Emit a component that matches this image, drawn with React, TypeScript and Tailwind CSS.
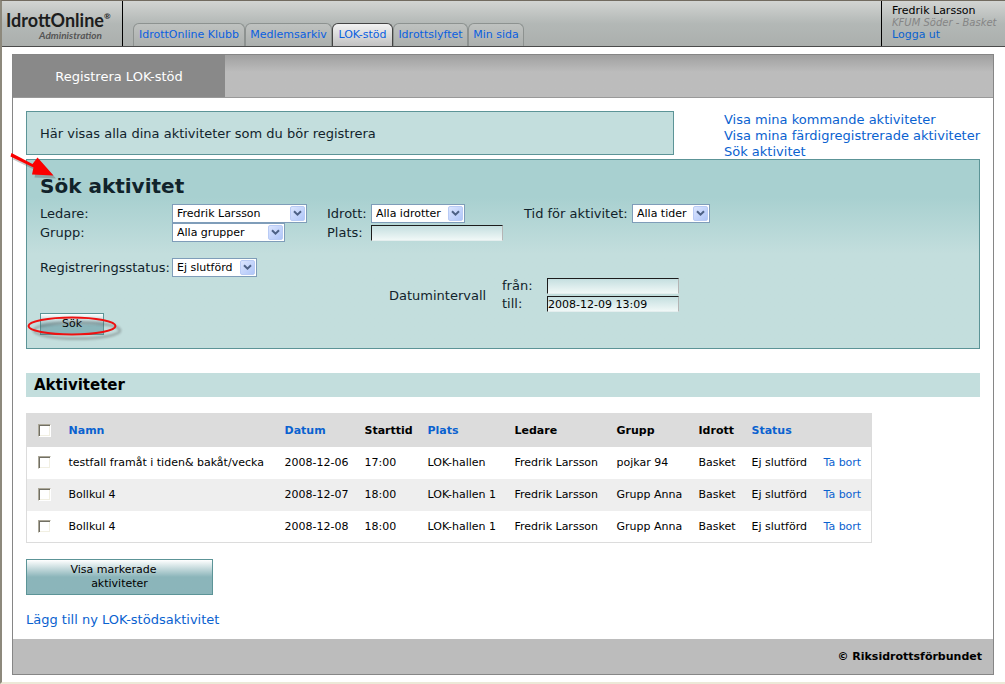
import type { ReactNode } from "react";

const tabs = [
  { label: "IdrottOnline Klubb", width: "w-[112px]", active: false },
  { label: "Medlemsarkiv", width: "w-[87px]", active: false },
  { label: "LOK-stöd", width: "w-[61px]", active: true },
  { label: "Idrottslyftet", width: "w-[75px]", active: false },
  { label: "Min sida", width: "w-[56px]", active: false },
];

const columns = [
  { label: "Namn", sortable: true, width: "w-[216px]" },
  { label: "Datum", sortable: true, width: "w-[80px]" },
  { label: "Starttid", sortable: false, width: "w-[63px]" },
  { label: "Plats", sortable: true, width: "w-[87px]" },
  { label: "Ledare", sortable: false, width: "w-[102px]" },
  { label: "Grupp", sortable: false, width: "w-[82px]" },
  { label: "Idrott", sortable: false, width: "w-[53px]" },
  { label: "Status", sortable: true, width: "w-[72px]" },
];

const activities = [
  ["testfall framåt i tiden& bakåt/vecka", "2008-12-06", "17:00", "LOK-hallen", "Fredrik Larsson", "pojkar 94", "Basket", "Ej slutförd"],
  ["Bollkul 4", "2008-12-07", "18:00", "LOK-hallen 1", "Fredrik Larsson", "Grupp Anna", "Basket", "Ej slutförd"],
  ["Bollkul 4", "2008-12-08", "18:00", "LOK-hallen 1", "Fredrik Larsson", "Grupp Anna", "Basket", "Ej slutförd"],
];

function Select({ id, value, width }: { id: string; value: string; width: string }) {
  return (
    <div className={`relative h-[19px] ${width}`}>
      <select
        id={id}
        className="block h-full w-full appearance-none border border-[#7f9db9] bg-white pl-1 text-[11px] leading-[17px] text-black outline-none"
      >
        <option>{value}</option>
      </select>
      <span className="pointer-events-none absolute top-[2px] right-[2px] flex h-[15px] w-[15px] items-center justify-center rounded-[2px] border border-[#b9cbf5] bg-linear-to-br from-[#dbe5fe] to-[#b0c6f8]">
        <svg width="9" height="7" viewBox="0 0 9 7" fill="none" aria-hidden="true">
          <path d="M1 1.2 4.5 4.7 8 1.2" stroke="#4d6185" strokeWidth="2" />
        </svg>
      </span>
    </div>
  );
}

function TextInput({ id, value }: { id: string; value?: string }) {
  return (
    <input
      id={id}
      type="text"
      defaultValue={value}
      className="block h-4 w-[132px] border border-t-[#1c1c1c] border-r-[#b5b5b5] border-b-[#e4eeee] border-l-[#1c1c1c] bg-linear-to-b from-[#c5dfe0] to-[#f0f8f7] text-[11px] leading-[14px] text-black outline-none"
    />
  );
}

function Checkbox({ label }: { label: string }) {
  return (
    <input
      type="checkbox"
      aria-label={label}
      className="block h-[13px] w-[13px] appearance-none border border-t-[#aca899] border-r-white border-b-white border-l-[#aca899] bg-white shadow-[inset_1px_1px_0_#716f64,inset_-1px_-1px_0_#f1efe2]"
    />
  );
}

function Link({ children }: { children: ReactNode }) {
  return (
    <a href="#" className="text-[#0a62d0]">
      {children}
    </a>
  );
}

export default function App() {
  return (
    <div className="border-t border-b-2 border-l-2 border-t-[#716a5f] border-b-[#ece9d8] border-l-[#8d897c] bg-white font-['DejaVu_Sans',Verdana,sans-serif] text-[13px] text-[#11232b]">
      <header className="flex h-[46px] border-b border-[#4b4b4b] bg-linear-to-b from-[#d2d4d2] via-[#b3b8b6] to-[#abafad]">
        <div className="flex w-[121px] flex-col border-r border-black pt-2.5 pl-1 font-[Lato,sans-serif]">
          <div className="flex items-start text-[18px] leading-[18px] font-bold text-[#1d1d1d]">
            IdrottOnline
            <span className="text-[8px] leading-[10px]">®</span>
          </div>
          <div className="w-[96px] text-right text-[10px] leading-3 font-bold text-[#555] italic">Administration</div>
        </div>
        <nav className="ml-2.5 flex flex-1 items-end">
          {tabs.map((tab) => (
            <a
              key={tab.label}
              href="#"
              className={`flex h-[23px] items-center justify-center rounded-t-[6px] border border-b-0 pt-px text-[11px] whitespace-nowrap text-[#0a5fe0] ${tab.width} ${
                tab.active
                  ? "border-[#444] bg-linear-to-b from-[#f2f2f2] to-[#c2c2c2]"
                  : "border-[#8d9290] bg-linear-to-b from-[#bfc2c0] to-[#abafad]"
              }`}
            >
              {tab.label}
            </a>
          ))}
        </nav>
        <div className="w-[124px] border-l border-black pt-1 pl-2.5 text-[11px] leading-3 whitespace-nowrap">
          <div className="text-black">Fredrik Larsson</div>
          <div className="text-[10px] text-[#858585] italic">KFUM Söder - Basket</div>
          <Link>Logga ut</Link>
        </div>
      </header>

      <main className="mt-[7px] mr-[11px] mb-[7px] ml-2.5 border border-[#868686]">
        <div className="flex h-[43px] border-b border-[#999] bg-linear-to-b from-[#a0a0a0] to-[#bcbcbc] to-40%">
          <div className="flex w-[212px] items-center justify-center bg-[#898989] pt-0.5 text-white">Registrera LOK-stöd</div>
        </div>

        <div className="px-[13px] pt-[13px] pb-[11px]">
          <div className="flex items-start justify-between">
            <div className="flex h-11 w-[648px] items-center border border-[#5c9497] bg-[#c3dedd] px-[13px] pt-0.5">
              Här visas alla dina aktiviteter som du bör registrera
            </div>
            <div className="-mb-1 flex w-[256px] flex-col pt-px leading-4 whitespace-nowrap">
              <Link>Visa mina kommande aktiviteter</Link>
              <Link>Visa mina färdigregistrerade aktiviteter</Link>
              <Link>Sök aktivitet</Link>
            </div>
          </div>

          <section className="relative mt-[3px] border border-[#5c9497] bg-linear-to-b from-[#a8d0d0] from-20% to-[#c3dedd] to-50% px-[13px] pt-[14px] pb-[13px]">
            <h1 className="mb-1.5 text-[20px] leading-6 font-bold">Sök aktivitet</h1>
            <form>
              <div className="flex leading-[19px] whitespace-nowrap">
                <div className="grid w-[287px] grid-cols-[132px_1fr] content-start">
                  <label htmlFor="ledare">Ledare:</label>
                  <Select id="ledare" value="Fredrik Larsson" width="w-[135px]" />
                  <label htmlFor="grupp">Grupp:</label>
                  <Select id="grupp" value="Alla grupper" width="w-[113px]" />
                </div>
                <div className="grid w-[197px] grid-cols-[44px_1fr] content-start items-center">
                  <label htmlFor="idrott">Idrott:</label>
                  <Select id="idrott" value="Alla idrotter" width="w-[94px]" />
                  <label htmlFor="plats">Plats:</label>
                  <TextInput id="plats" />
                </div>
                <div className="flex items-start">
                  <label htmlFor="tid" className="w-[108px]">Tid för aktivitet:</label>
                  <Select id="tid" value="Alla tider" width="w-[78px]" />
                </div>
              </div>
              <div className="mt-4 flex leading-[19px] whitespace-nowrap">
                <label htmlFor="status" className="w-[132px]">Registreringsstatus:</label>
                <Select id="status" value="Ej slutförd" width="w-[85px]" />
              </div>
              <fieldset className="ml-[349px] flex items-center">
                <div className="w-[113px] pt-0.5">Datumintervall</div>
                <div className="grid grid-cols-[45px_auto] items-center leading-[18px]">
                  <label htmlFor="fran">från:</label>
                  <TextInput id="fran" />
                  <label htmlFor="till">till:</label>
                  <TextInput id="till" value="2008-12-09 13:09" />
                </div>
              </fieldset>
              <button
                type="button"
                className="block h-[22px] w-16 border border-[#5c9497] bg-linear-to-b from-white to-[#8bb5ba] to-60% text-[11px] leading-5 text-black"
              >
                Sök
              </button>
            </form>
            <svg className="pointer-events-none absolute -top-2 -left-[22px] h-[42px] w-14" viewBox="0 0 56 42" aria-hidden="true">
              <g fill="#444" opacity=".3" transform="translate(2.5 3)">
                <path d="M6.500 1 27.500 12 32.500 5.500 48.500 23.500 27 22.500 28.500 15.500 5.500 4.500Z" />
              </g>
              <path d="M6.500 1 27.500 12 32.500 5.500 48.500 23.500 27 22.500 28.500 15.500 5.500 4.500Z" fill="#fb0000" />
            </svg>
            <svg className="pointer-events-none absolute bottom-1 left-0 h-8 w-[104px]" viewBox="0 0 104 32" fill="none" aria-hidden="true">
              <defs>
                <filter id="ring-shadow" x="-10%" y="-40%" width="120%" height="180%">
                  <feGaussianBlur stdDeviation="1" />
                </filter>
              </defs>
              <ellipse cx="50" cy="18.500" rx="43" ry="8" stroke="#444" strokeWidth="3" opacity=".3" filter="url(#ring-shadow)" />
              <ellipse cx="45" cy="14" rx="43.500" ry="8.500" stroke="#ee1111" strokeWidth="2" />
            </svg>
          </section>

          <h2 className="mt-6 h-6 bg-[#c3dedd] pl-2 text-[15px] leading-6 font-bold text-black">Aktiviteter</h2>

          <table className="mt-4 w-[846px] table-fixed border-collapse border border-[#dcdcdc] text-left text-[11px] whitespace-nowrap text-black">
            <thead className="bg-[#dcdcdc]">
              <tr className="h-[33px]">
                <th className="w-[42px] pl-[11px]">
                  <Checkbox label="Markera alla" />
                </th>
                {columns.map((column) => (
                  <th key={column.label} className={`p-0 pt-px font-bold ${column.width}`}>
                    {column.sortable ? <Link>{column.label}</Link> : column.label}
                  </th>
                ))}
                <th aria-label="Åtgärd" />
              </tr>
            </thead>
            <tbody>
              {activities.map((row, index) => (
                <tr key={index} className="h-8 even:bg-[#eee]">
                  <td className="pl-[11px]">
                    <Checkbox label={`Markera ${row[0]} ${row[1]}`} />
                  </td>
                  {row.map((cell, cellIndex) => (
                    <td key={cellIndex} className="p-0 pt-px">{cell}</td>
                  ))}
                  <td className="p-0 pt-px">
                    <Link>Ta bort</Link>
                  </td>
                </tr>
              ))}
            </tbody>
          </table>

          <button
            type="button"
            className="mt-4 block h-9 w-[187px] border border-[#5c9497] bg-linear-to-b from-white to-[#8bb5ba] to-50% text-[11px] leading-[14px] text-black"
          >
            <span className="block pr-3">Visa markerade</span>
            <span className="block">aktiviteter</span>
          </button>
          <div className="mt-[17px] leading-4">
            <Link>Lägg till ny LOK-stödsaktivitet</Link>
          </div>
        </div>

        <footer className="flex h-[35px] items-center justify-end bg-[#bcbcbc] pt-0.5 pr-[11px] text-[11px] font-bold text-black">
          © Riksidrottsförbundet
        </footer>
      </main>
    </div>
  );
}
